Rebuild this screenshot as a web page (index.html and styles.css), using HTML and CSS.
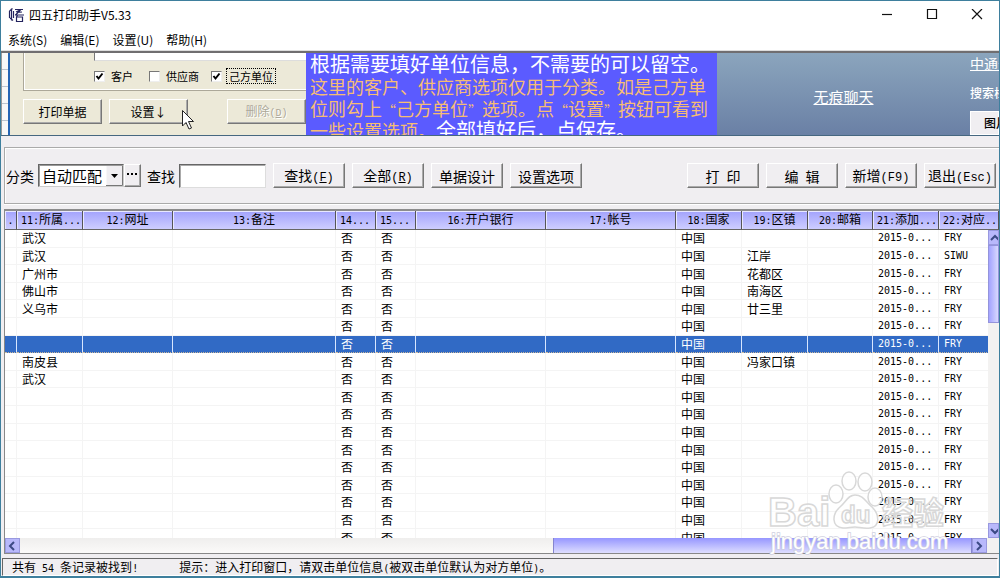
FILE: index.html
```html
<!DOCTYPE html>
<html lang="zh-CN">
<head>
<meta charset="utf-8">
<title>四五打印助手V5.33</title>
<link rel="stylesheet" href="styles.css">
</head>
<body>
<div class="window">
  <header class="titlebar">
    <svg class="app-icon" viewBox="0 0 16 16" aria-hidden="true"><path d="M3.500 1.500v12M1.500 4v7M5.500 4v7M1.500 4l3-2.500M2 11l3 2.500M7 2.500h8M8 5l5-2.500M9 5.500l5-.500M12.500 3l-5 5M7 8h9M8.500 10h6v4.500h-6zM8.500 10l1-2"/></svg>
    <span class="app-name">四五打印助手V5.33</span>
    <button class="win-btn" aria-label="最小化"><svg viewBox="0 0 12 12"><path d="M1 5.500h10"/></svg></button>
    <button class="win-btn" aria-label="最大化"><svg viewBox="0 0 12 12"><path d="M1.500 .500h9v9h-9z"/></svg></button>
    <button class="win-btn" aria-label="关闭"><svg viewBox="0 0 12 12"><path d="M1 0l10 10M11 0L1 10"/></svg></button>
  </header>
  <nav class="menubar">
    <button>系统(S)</button><button>编辑(E)</button><button>设置(U)</button><button>帮助(H)</button>
  </nav>

  <section class="promo">
    <div class="edge"></div>
    <div class="form">
      <div class="form-group">
        <input class="form-field" type="text" aria-label="备注">
        <div class="checks">
          <label><input type="checkbox" checked><span>客户</span></label>
          <label><input type="checkbox"><span>供应商</span></label>
          <label><input type="checkbox" checked><span class="focused">己方单位</span></label>
        </div>
      </div>
      <div class="form-buttons">
        <button class="btn form-btn">打印单据</button>
        <button class="btn form-btn">设置↓</button>
        <button class="btn form-btn last" disabled>删除<span class="mono">(<u>D</u>)</span></button>
      </div>
      <svg class="cursor" viewBox="0 0 12 20" aria-hidden="true"><path d="M.5.5v15.500l3.500-3.500 3 6.500 2.500-1-3-6.500h5z"/></svg>
    </div>
    <div class="banner">
      <p class="lead">根据需要填好单位信息，不需要的可以留空。</p>
      <p>这里的客户、供应商选项仅用于分类。如是己方单</p>
      <p>位则勾上<q>“</q>己方单位<q>”</q>选项。点<q>“</q>设置<q>”</q>按钮可看到</p>
      <p>一些设置选项。<strong>全部填好后，点保存。</strong></p>
    </div>
    <div class="chat"><a href="#">无痕聊天</a></div>
    <div class="side">
      <a href="#">中通天下</a>
      <span class="search">搜索栏</span>
      <span class="tab">图片</span>
    </div>
  </section>

  <section class="toolbar">
    <label for="kind">分类</label>
    <select id="kind"><option>自动匹配</option></select>
    <button class="btn more" aria-label="更多"><svg viewBox="0 0 11 2"><path d="M0 0h2v2H0zM4 0h2v2H4zM8 0h2v2H8z"/></svg></button>
    <label for="find" class="find-label">查找</label>
    <input id="find" type="text">
    <div class="group">
      <button class="btn">查找<span class="mono">(<u>F</u>)</span></button>
      <button class="btn">全部<span class="mono">(<u>R</u>)</span></button>
      <button class="btn">单据设计</button>
      <button class="btn">设置选项</button>
    </div>
    <div class="group end">
      <button class="btn">打&ensp;印</button>
      <button class="btn">编&ensp;辑</button>
      <button class="btn">新增<span class="mono">(F9)</span></button>
      <button class="btn">退出<span class="mono">(Esc)</span></button>
    </div>
  </section>

  <main class="list">
    <div class="viewport">
      <table>
        <colgroup><col class="c12"><col class="c66"><col class="c90"><col class="c163"><col class="c40"><col class="c40"><col class="c130"><col class="c130"><col class="c66"><col class="c66"><col class="c65"><col class="c66"><col></colgroup>
        <thead><tr><th><i>.</i></th><th class="cut"><i>11:</i>所属<i>...</i></th><th><i>12:</i>网址</th><th><i>13:</i>备注</th><th class="cut"><i>14...</i></th><th class="cut"><i>15...</i></th><th><i>16:</i>开户银行</th><th><i>17:</i>帐号</th><th><i>18:</i>国家</th><th><i>19:</i>区镇</th><th><i>20:</i>邮箱</th><th class="cut"><i>21:</i>添加<i>...</i></th><th class="cut"><i>22:</i>对应<i>...</i></th></tr></thead>
        <tbody>
          <tr><td><td>武汉<td><td><td>否<td>否<td><td><td>中国<td><td><td>2015-0...<td>FRY</tr>
          <tr><td><td>武汉<td><td><td>否<td>否<td><td><td>中国<td>江岸<td><td>2015-0...<td>SIWU</tr>
          <tr><td><td>广州市<td><td><td>否<td>否<td><td><td>中国<td>花都区<td><td>2015-0...<td>FRY</tr>
          <tr><td><td>佛山市<td><td><td>否<td>否<td><td><td>中国<td>南海区<td><td>2015-0...<td>FRY</tr>
          <tr><td><td>义乌市<td><td><td>否<td>否<td><td><td>中国<td>廿三里<td><td>2015-0...<td>FRY</tr>
          <tr><td><td><td><td><td>否<td>否<td><td><td>中国<td><td><td>2015-0...<td>FRY</tr>
          <tr class="selected"><td><td><td><td><td>否<td>否<td><td><td>中国<td><td><td>2015-0...<td>FRY</tr>
          <tr><td><td>南皮县<td><td><td>否<td>否<td><td><td>中国<td>冯家口镇<td><td>2015-0...<td>FRY</tr>
          <tr><td><td>武汉<td><td><td>否<td>否<td><td><td>中国<td><td><td>2015-0...<td>FRY</tr>
          <tr><td><td><td><td><td>否<td>否<td><td><td>中国<td><td><td>2015-0...<td>FRY</tr>
          <tr><td><td><td><td><td>否<td>否<td><td><td>中国<td><td><td>2015-0...<td>FRY</tr>
          <tr><td><td><td><td><td>否<td>否<td><td><td>中国<td><td><td>2015-0...<td>FRY</tr>
          <tr><td><td><td><td><td>否<td>否<td><td><td>中国<td><td><td>2015-0...<td>FRY</tr>
          <tr><td><td><td><td><td>否<td>否<td><td><td>中国<td><td><td>2015-0...<td>FRY</tr>
          <tr><td><td><td><td><td>否<td>否<td><td><td>中国<td><td><td>2015-0...<td>FRY</tr>
          <tr><td><td><td><td><td>否<td>否<td><td><td>中国<td><td><td>2015-0...<td>FRY</tr>
          <tr><td><td><td><td><td>否<td>否<td><td><td>中国<td><td><td>2015-0...<td>FRY</tr>
          <tr><td><td><td><td><td>否<td>否<td><td><td>中国<td><td><td>2015-0...<td>FRY</tr>
        </tbody>
      </table>
      <div class="vscroll">
        <button aria-label="向上"><svg viewBox="0 0 12 12"><path d="M2 8l4-4 4 4"/></svg></button>
        <div class="vthumb"></div>
        <button class="down" aria-label="向下"><svg viewBox="0 0 12 12"><path d="M2 4l4 4 4-4"/></svg></button>
      </div>
    </div>
    <div class="hscroll">
      <button aria-label="向左"><svg viewBox="0 0 12 12"><path d="M8 2L4 6l4 4"/></svg></button>
      <div class="htrack"><div class="hthumb"></div></div>
      <button aria-label="向右"><svg viewBox="0 0 12 12"><path d="M4 2l4 4-4 4"/></svg></button>
    </div>
  </main>

  <footer class="status">
    <span>共有<i> 54 </i>条记录被找到<i>!</i></span>
    <span>提示：进入打印窗口，请双击单位信息<i>(</i>被双击单位默认为对方单位<i>)</i>。</span>
  </footer>

  <svg class="watermark" viewBox="0 0 184 88" aria-hidden="true">
    <g class="mark">
      <text class="bai" x="0" y="56">Bai</text>
      <ellipse cx="68" cy="24" rx="7" ry="9"/>
      <ellipse cx="81" cy="11" rx="7" ry="9"/>
      <ellipse cx="97" cy="12" rx="7" ry="9"/>
      <ellipse cx="107" cy="27" rx="7" ry="9"/>
      <path d="M87 25c-7 0-9 7-15 12-8 7-9 20 3 21 5 0 8-1 12-1s9 2 15 1c11-2 9-14 2-21-6-5-9-12-17-12z"/>
      <text class="du" x="73" y="53">du</text>
      <text class="jy" x="114" y="54">经验</text>
    </g>
    <text class="site" x="3" y="79">jingyan.baidu.com</text>
  </svg>
</div>
</body>
</html>
```
FILE: styles.css
```css
* { box-sizing: border-box; }
body {
  margin: 0;
  font: 12px/16px "Noto Sans CJK SC", sans-serif;
  color: #000;
}
button, input, select { font: inherit; color: inherit; margin: 0; padding: 0; border-radius: 0; }
i, .mono { font-family: "Liberation Mono", "Noto Sans CJK SC", monospace; font-style: normal; }
i { font-family: "DejaVu Sans Mono", monospace; font-size: 10px; white-space: pre; }
.mono { font-size: 12px; }

.window {
  position: relative;
  display: flex;
  flex-direction: column;
  height: 100vh;
  border: 1px solid #3e7f9d;
  border-bottom-width: 2px;
  background: #f0eef1;
  overflow: hidden;
}

/* title and menu */
.titlebar { display: flex; align-items: center; height: 28px; padding-left: 7px; background: #fff; }
.app-icon { width: 16px; height: 16px; fill: none; stroke: #23235e; stroke-width: 1.2; }
.app-name { flex: 1; padding-left: 5px; font-size: 12px; }
.win-btn { width: 45px; height: 28px; border: 0; background: none; }
.win-btn svg { display: block; width: 12px; height: 12px; margin: 0 auto; fill: none; stroke: #111; stroke-width: 1.2; }
.menubar { display: flex; gap: 13px; height: 22px; padding: 0 7px; background: #fff; border-bottom: 1px solid #ddd; }
.menubar button { border: 0; background: none; font-size: 12px; line-height: 18px; }

/* classic raised button */
.btn {
  height: 25px;
  border: 1px solid;
  border-color: #fff #777 #777 #fff;
  box-shadow: inset -1px -1px #aaa;
  background: #f0eef1;
  font-size: 14px;
  line-height: 22px;
  white-space: nowrap;
}

/* embedded picture strip */
.promo { display: flex; height: 85px; border-top: 2px solid #706e70; border-bottom: 1px solid #466780; overflow: hidden; }
.edge { width: 9px; border-left: 1px solid #999; border-right: 2px solid #2464b4; background: repeating-linear-gradient(#f8f8f8 0 16px, #bcc5cf 16px 17px); }
.form { position: relative; flex: none; width: 296px; padding-left: 13px; background: #ece9d8; }
.form-group { height: 38px; border: 1px solid #aca899; border-width: 0 0 1px 1px; box-shadow: inset 1px -1px #fff; }
.form-field { display: block; width: 212px; height: 8px; margin-left: 70px; border: 0; border-left: 1px solid #777; border-bottom: 1px solid #ddd; background: #fff; }
.checks { display: flex; align-items: center; gap: 16px; height: 30px; padding-left: 70px; }
.checks label { display: flex; align-items: center; gap: 6px; font-size: 11px; }
.checks label:last-child { margin-left: -4px; gap: 5px; }
.checks span { line-height: 14px; }
.checks input {
  appearance: none; width: 11px; height: 11px; background: #fff;
  border: 1px solid; border-color: #777 #eee #eee #777;
}
.checks input:checked {
  background: #fff url("data:image/svg+xml,%3Csvg xmlns='http://www.w3.org/2000/svg' viewBox='0 0 9 9'%3E%3Cpath d='M1.500 4l2 2.500 4-5' fill='none' stroke='%23000' stroke-width='2'/%3E%3C/svg%3E") center / 9px 9px;
}
.focused { padding: 0 2px; outline: 1px dotted #000; }
.form-buttons { display: flex; gap: 7px; padding-top: 8px; }
.form-btn { width: 79px; background: #ece9d8; font-size: 12px; }
.form-btn .mono { font-size: 10px; }
.form-btn.last { margin-left: 32px; }
.form-btn:disabled { color: #aca899; text-shadow: 1px 1px #fff; }
.cursor { position: absolute; left: 172px; top: 57px; width: 12px; height: 20px; fill: #fff; stroke: #222; }

.banner { flex: none; width: 411px; padding-left: 4px; background: #5b5bff; color: #f6bd74; white-space: nowrap; overflow: hidden; }
.banner p { margin: 0; font-size: 18px; line-height: 22px; height: 22px; }
.banner q { quotes: none; font-size: 14px; }
.banner strong { font-size: 20px; font-weight: 400; color: #fff; }
.banner .lead { font-size: 20px; color: #fff; }
.chat, .side { background: linear-gradient(#8ba5bd, #6a80a5); color: #fff; }
.chat { flex: 1; display: flex; align-items: center; justify-content: center; padding-top: 6px; }
.chat a, .side a { color: inherit; font-size: 15px; }
.side { width: 29px; display: flex; flex-direction: column; white-space: nowrap; overflow: hidden; }
.side a { height: 29px; font-size: 14px; line-height: 20px; }
.search { height: 30px; line-height: 22px; font-weight: 500; }
.tab { flex: 1; padding-left: 13px; border: 1px solid #fff; background: #f0eef1; color: #000; line-height: 22px; font-weight: 500; }

/* toolbar */
.toolbar {
  display: flex; align-items: center;
  height: 57px; margin: 11px 0 5px 3px; padding: 0 3px 0 1px;
  border: 1px solid #aaa; border-right: 0;
  box-shadow: inset 1px 1px #fff, 0 1px #fff;
  font-size: 14px;
}
.toolbar select {
  appearance: none; width: 86px; height: 23px; margin-left: 4px; padding-left: 3px;
  border: 1px solid; border-color: #666 #ccc #ccc #666; box-shadow: inset 1px 1px #999;
  font-size: 15px;
  background: #fff url("data:image/svg+xml,%3Csvg xmlns='http://www.w3.org/2000/svg' viewBox='0 0 17 21'%3E%3Cpath d='M.5.500h16v20H.5z' fill='%23f0eef1'/%3E%3Cpath d='M16.500.500v20H0' fill='none' stroke='%23777'/%3E%3Cpath d='M5 9h7l-3.500 4z'/%3E%3C/svg%3E") right center / 17px 21px no-repeat;
}
.more { width: 17px; height: 23px; padding-bottom: 4px; }
.more svg { display: block; width: 11px; height: 2px; margin: 0 auto; }
.find-label { margin-left: 6px; }
.toolbar input { width: 87px; height: 24px; margin-left: 4px; padding: 0 3px; border: 1px solid; border-color: #666 #ddd #ddd #666; box-shadow: inset 1px 1px #aaa; background: #fff; }
.group { display: flex; gap: 7px; margin-left: 7px; }
.group .btn { width: 72px; }
.group.end { margin-left: auto; }

/* record list */
.list { flex: 1; min-height: 0; display: flex; flex-direction: column; margin-left: 3px; border: 1px solid #888; border-right: 0; border-top: 2px solid #8c8c8c; background: #fff; }
.viewport { position: relative; flex: 1; min-height: 0; overflow: hidden; }
table { width: 100%; height: 336px; table-layout: fixed; border-collapse: separate; border-spacing: 0; }
.c12 { width: 12px; } .c40 { width: 40px; } .c65 { width: 65px; } .c66 { width: 66px; }
.c90 { width: 90px; } .c130 { width: 130px; } .c163 { width: 163px; }
th {
  height: 18px; padding: 0; font-weight: 400; line-height: 16px; white-space: nowrap; overflow: hidden;
  background: linear-gradient(#a2a2fc, #cdcdff);
  border-right: 1px solid #555; border-bottom: 1px solid #666; box-shadow: inset 1px 1px #e8e8ff;
}
.cut { text-align: left; padding-left: 4px; }
td { padding: 0 0 1px 5px; line-height: 15px; white-space: nowrap; overflow: hidden; border-right: 1px solid #f4f4f4; border-bottom: 1px solid #f4f4f4; }
td:nth-child(n+12) { font-family: "DejaVu Sans Mono", monospace; font-size: 10px; }
.selected td { background: #316ac5; color: #fff; border-right-color: #d8e6ff; border-bottom: 1px dotted #c9b79a; }

.vscroll { position: absolute; right: 0; top: 19px; bottom: 0; width: 11px; display: flex; flex-direction: column; background: #f3f2f1; }
.vscroll button, .hscroll button { flex: none; border: 1px solid #9999df; background: #b8b8fb; overflow: hidden; }
.vscroll button { height: 15px; }
.vscroll svg, .hscroll svg { display: block; width: 12px; height: 12px; fill: none; stroke: #3c4a85; stroke-width: 2; }
.vthumb { height: 78px; border: 1px solid #9494dc; background: linear-gradient(90deg, #a3a3ff, #d8d8ff); }
.down { margin-top: auto; }
.hscroll { display: flex; height: 15px; padding-right: 12px; background: #f3f2f1; }
.hscroll button { width: 15px; }
.htrack { flex: 1; background: linear-gradient(#efeeed, #fbfaf9); }
.hthumb { width: 44%; height: 100%; margin-left: auto; border-left: 1px solid #8585cf; border-right: 1px solid #8585cf; background: linear-gradient(#9696ff, #dedeff); }

.status { display: flex; gap: 41px; height: 18px; margin: 4px 1px 0; padding-left: 9px; border: 1px solid; border-color: #666 #fff #fff #666; line-height: 16px; }

.watermark { position: absolute; right: 47px; bottom: 18px; width: 184px; height: 88px; font-family: "Liberation Sans", "Noto Sans CJK SC", sans-serif; overflow: visible; }
.mark { fill: #fff; fill-opacity: .6; stroke: #d8d8d8; stroke-width: 1.5; }
.bai { font-size: 40px; font-weight: 700; }
.du { font-size: 24px; font-weight: 700; }
.jy { font-size: 31px; font-weight: 700; }
.site { font-size: 22px; fill: #fff; stroke: #cfcfe0; stroke-width: 1.5; paint-order: stroke; }
```
